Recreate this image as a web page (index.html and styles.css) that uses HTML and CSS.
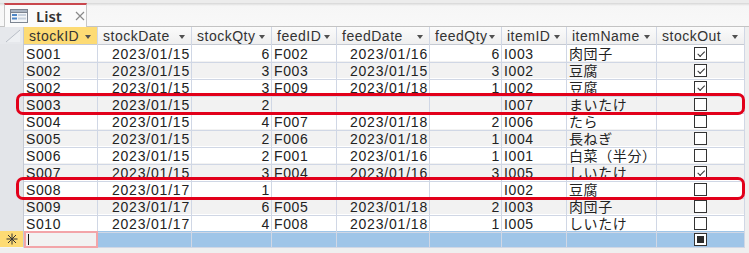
FILE: index.html
```html
<!DOCTYPE html>
<html lang="ja">
<head>
    <meta charset="UTF-8">
    <title>List</title>
    <link rel="stylesheet" href="styles.css">
</head>
<body>
    <!-- pestaña del objeto -->
    <div class="tabbar">
        <div class="tab">
            <svg class="tab-icon" width="18" height="16" viewBox="0 0 18 16">
                <rect x="0.5" y="1.5" width="17" height="13" fill="#f4f6f9" stroke="#7d8591"/>
                <rect x="0.5" y="1.5" width="17" height="3" fill="#a9b3c1" stroke="#7d8591"/>
                <rect x="2" y="6" width="5" height="2" fill="#4e86c6"/>
                <rect x="8" y="6" width="8" height="2" fill="#c9d3df"/>
                <rect x="2" y="9.5" width="5" height="2" fill="#4e86c6"/>
                <rect x="8" y="9.5" width="8" height="2" fill="#c9d3df"/>
            </svg>
            <span class="tab-title">List</span>
            <svg class="tab-close" width="10" height="10" viewBox="0 0 10 10">
                <path d="M1 1 L9 9 M9 1 L1 9" stroke="#8a8a8a" stroke-width="1.2"/>
            </svg>
        </div>
    </div>

    <div class="sheet">
        <div class="row head">
            <div class="cell sel corner">
                <svg width="23" height="16" viewBox="0 0 23 16">
                    <path d="M6 14 L20 2 L20 14 Z" fill="#eef0f3"/>
                    <path d="M6 14 L20 2" stroke="#b9bec7" stroke-width="1"/>
                </svg>
            </div>
            <div class="cell active">stockID<i class="arrow"></i></div>
            <div class="cell">stockDate<i class="arrow"></i></div>
            <div class="cell">stockQty<i class="arrow"></i></div>
            <div class="cell">feedID<i class="arrow"></i></div>
            <div class="cell">feedDate<i class="arrow"></i></div>
            <div class="cell">feedQty<i class="arrow"></i></div>
            <div class="cell">itemID<i class="arrow"></i></div>
            <div class="cell">itemName<i class="arrow"></i></div>
            <div class="cell">stockOut<i class="arrow"></i></div>
        </div>

        <div class="row">
            <div class="cell sel"></div>
            <div class="cell">S001</div><div class="cell num">2023/01/15</div><div class="cell num">6</div>
            <div class="cell">F002</div><div class="cell num">2023/01/16</div><div class="cell num">6</div>
            <div class="cell">I003</div><div class="cell">肉団子</div>
            <div class="cell box"><span class="chk on"></span></div>
        </div>
        <div class="row alt">
            <div class="cell sel"></div>
            <div class="cell">S002</div><div class="cell num">2023/01/15</div><div class="cell num">3</div>
            <div class="cell">F003</div><div class="cell num">2023/01/15</div><div class="cell num">3</div>
            <div class="cell">I002</div><div class="cell">豆腐</div>
            <div class="cell box"><span class="chk on"></span></div>
        </div>
        <div class="row">
            <div class="cell sel"></div>
            <div class="cell">S002</div><div class="cell num">2023/01/15</div><div class="cell num">3</div>
            <div class="cell">F009</div><div class="cell num">2023/01/18</div><div class="cell num">1</div>
            <div class="cell">I002</div><div class="cell">豆腐</div>
            <div class="cell box"><span class="chk on"></span></div>
        </div>
        <div class="row alt">
            <div class="cell sel"></div>
            <div class="cell">S003</div><div class="cell num">2023/01/15</div><div class="cell num">2</div>
            <div class="cell"></div><div class="cell num"></div><div class="cell num"></div>
            <div class="cell">I007</div><div class="cell">まいたけ</div>
            <div class="cell box"><span class="chk"></span></div>
        </div>
        <div class="row">
            <div class="cell sel"></div>
            <div class="cell">S004</div><div class="cell num">2023/01/15</div><div class="cell num">4</div>
            <div class="cell">F007</div><div class="cell num">2023/01/18</div><div class="cell num">2</div>
            <div class="cell">I006</div><div class="cell">たら</div>
            <div class="cell box"><span class="chk"></span></div>
        </div>
        <div class="row alt">
            <div class="cell sel"></div>
            <div class="cell">S005</div><div class="cell num">2023/01/15</div><div class="cell num">2</div>
            <div class="cell">F006</div><div class="cell num">2023/01/18</div><div class="cell num">1</div>
            <div class="cell">I004</div><div class="cell">長ねぎ</div>
            <div class="cell box"><span class="chk"></span></div>
        </div>
        <div class="row">
            <div class="cell sel"></div>
            <div class="cell">S006</div><div class="cell num">2023/01/15</div><div class="cell num">2</div>
            <div class="cell">F001</div><div class="cell num">2023/01/16</div><div class="cell num">1</div>
            <div class="cell">I001</div><div class="cell">白菜（半分）</div>
            <div class="cell box"><span class="chk"></span></div>
        </div>
        <div class="row alt">
            <div class="cell sel"></div>
            <div class="cell">S007</div><div class="cell num">2023/01/15</div><div class="cell num">3</div>
            <div class="cell">F004</div><div class="cell num">2023/01/16</div><div class="cell num">3</div>
            <div class="cell">I005</div><div class="cell">しいたけ</div>
            <div class="cell box"><span class="chk on"></span></div>
        </div>
        <div class="row">
            <div class="cell sel"></div>
            <div class="cell">S008</div><div class="cell num">2023/01/17</div><div class="cell num">1</div>
            <div class="cell"></div><div class="cell num"></div><div class="cell num"></div>
            <div class="cell">I002</div><div class="cell">豆腐</div>
            <div class="cell box"><span class="chk"></span></div>
        </div>
        <div class="row alt">
            <div class="cell sel"></div>
            <div class="cell">S009</div><div class="cell num">2023/01/17</div><div class="cell num">6</div>
            <div class="cell">F005</div><div class="cell num">2023/01/18</div><div class="cell num">2</div>
            <div class="cell">I003</div><div class="cell">肉団子</div>
            <div class="cell box"><span class="chk"></span></div>
        </div>
        <div class="row">
            <div class="cell sel"></div>
            <div class="cell">S010</div><div class="cell num">2023/01/17</div><div class="cell num">4</div>
            <div class="cell">F008</div><div class="cell num">2023/01/18</div><div class="cell num">1</div>
            <div class="cell">I005</div><div class="cell">しいたけ</div>
            <div class="cell box"><span class="chk"></span></div>
        </div>

        <!-- fila nueva -->
        <div class="row new">
            <div class="cell sel">
                <svg width="12" height="12" viewBox="0 0 12 12">
                    <path d="M6 0.5 V11.5 M0.5 6 H11.5 M2 2 L10 10 M10 2 L2 10" stroke="#333" stroke-width="1"/>
                </svg>
            </div>
            <div class="cell edit"><span class="caret"></span></div>
            <div class="cell"></div><div class="cell"></div><div class="cell"></div><div class="cell"></div>
            <div class="cell"></div><div class="cell"></div><div class="cell"></div>
            <div class="cell box"><span class="chk null"></span></div>
        </div>

        <!-- marcas rojas -->
        <div class="mark mark-s003"></div>
        <div class="mark mark-s008"></div>
    </div>
</body>
</html>
```

FILE: styles.css
```css
/* Página */
body {
    margin: 0;
    background-color: #efefef;
    font-family: "Liberation Sans", "Noto Sans CJK JP", sans-serif;
    font-size: 14px;
    color: #222;
}

/* Barra de pestañas */
.tabbar {
    height: 26px;
    border-bottom: 1px solid #c3c3c3;
    background: linear-gradient(#ececec 0, #ececec 3px, #d6d6d6 3px, #f6f6f6 6px, #f8f8f8 100%);
    display: flex;
    align-items: flex-end;
    padding-left: 4px;
}

.tab {
    width: 83px;
    height: 24px;
    box-sizing: border-box;
    margin-bottom: -1px;
    border-top: 2px solid #c9474d;
    border-left: 1px solid #c6c6c6;
    border-right: 1px solid #c6c6c6;
    background-color: #fbfbfb;
    display: flex;
    align-items: center;
    padding-left: 5px;
}

.tab-icon {
    margin-right: 8px;
}

.tab-title {
    font-family: "Noto Sans", sans-serif;
    font-weight: 600;
    font-size: 15px;
    color: #333;
    margin-right: 13px;
}

/* Hoja de datos */
.sheet {
    position: relative;
}

.row {
    display: grid;
    grid-template-columns: 24px 74px 94px 80px 65px 93px 72px 65px 90px 88px;
    height: 17px;
    background-color: #fff;
    width: 745px;
}

.row.alt {
    background-color: #f2f2f2;
}

.cell {
    box-sizing: border-box;
    border-right: 1px solid #d0d7e5;
    border-bottom: 1px solid #d0d7e5;
    padding: 2px 2px 0;
    line-height: 16px;
    white-space: nowrap;
    letter-spacing: 0.6px;
}

.num {
    text-align: right;
    padding-right: 1px;
    letter-spacing: 0.8px;
}

.sel {
    background-color: #e3e5e9;
    border-right-color: #c5cad3;
    border-bottom-color: #f4f5f7;
}

/* Cabecera */
.head .cell {
    display: flex;
    align-items: center;
    justify-content: space-between;
    padding: 1px 6px 0 5px;
    background: linear-gradient(#fbfbfb, #efefef);
    border-bottom-color: #c5cad3;
    letter-spacing: 0.5px;
    color: #333;
}

.head .cell.active {
    background: #fddb74;
}

.head .corner {
    padding: 0;
    background: #e6e8ec;
}

.arrow {
    width: 0;
    height: 0;
    border-left: 3px solid transparent;
    border-right: 3px solid transparent;
    border-top: 4px solid #505050;
    margin-top: 2px;
}

/* Casillas */
.box {
    display: flex;
    align-items: center;
    justify-content: center;
    padding: 0;
}

.chk {
    width: 13px;
    height: 13px;
    box-sizing: border-box;
    border: 1px solid #333;
    background-color: #fff;
    position: relative;
}

.chk.on::after {
    content: "";
    position: absolute;
    left: 2px;
    top: 1px;
    width: 6px;
    height: 3px;
    border-left: 1.2px solid #333;
    border-bottom: 1.2px solid #333;
    transform: rotate(-45deg) translate(-1px, 2px);
}

.chk.null::after {
    content: "";
    position: absolute;
    left: 2px;
    top: 2px;
    width: 7px;
    height: 7px;
    background-color: #2b2b2b;
}

/* Fila nueva */
.row.new {
    background-color: #9fc5e8;
}

.new .sel {
    background-color: #fddb74;
    display: flex;
    align-items: center;
    justify-content: center;
    padding: 0;
}

.new .edit {
    background-color: #f2f2f2;
    border: 2px solid #f3a5a9;
    display: flex;
    align-items: center;
    padding: 0 2px;
}

.caret {
    width: 1px;
    height: 11px;
    background-color: #111;
}

/* Marcas rojas */
.mark {
    position: absolute;
    left: 16px;
    width: 729px;
    box-sizing: border-box;
    border: 3px solid #e2001a;
    border-radius: 7px;
}

.mark-s003 {
    top: 66px;
    height: 22px;
}

.mark-s008 {
    top: 150px;
    height: 23px;
}
```
